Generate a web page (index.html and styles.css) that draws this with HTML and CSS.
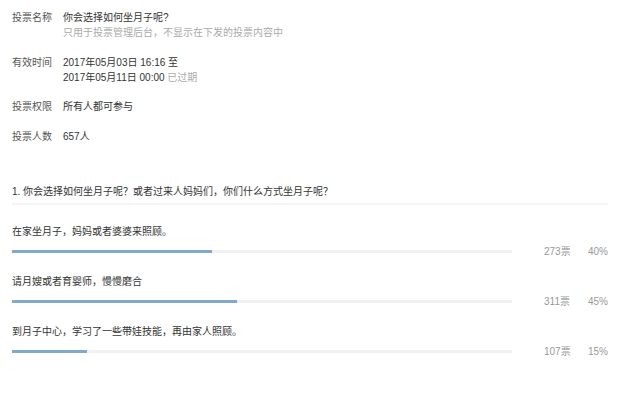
FILE: index.html
```html
<!DOCTYPE html>
<html lang="zh-CN">
<head>
    <meta charset="UTF-8">
    <meta name="viewport" content="width=device-width, initial-scale=1.0">
    <title>投票详情</title>
    <link rel="stylesheet" href="styles.css">
</head>
<body>
    <div class="info">
        <div class="row">
            <span class="label">投票名称</span>
            <div class="value">
                <p>你会选择如何坐月子呢?</p>
                <p class="hint">只用于投票管理后台，不显示在下发的投票内容中</p>
            </div>
        </div>
        <div class="row">
            <span class="label">有效时间</span>
            <div class="value">
                <p>2017年05月03日 16:16 至</p>
                <p>2017年05月11日 00:00 <span class="hint">已过期</span></p>
            </div>
        </div>
        <div class="row">
            <span class="label">投票权限</span>
            <div class="value"><p>所有人都可参与</p></div>
        </div>
        <div class="row">
            <span class="label">投票人数</span>
            <div class="value"><p>657人</p></div>
        </div>
    </div>

    <div class="question">1. 你会选择如何坐月子呢？或者过来人妈妈们，你们什么方式坐月子呢？</div>

    <ul class="options">
        <li>
            <p>在家坐月子，妈妈或者婆婆来照顾。</p>
            <div class="result">
                <div class="track"><div class="fill" style="width:40%"></div></div>
                <span class="count">273票</span>
                <span class="pct">40%</span>
            </div>
        </li>
        <li>
            <p>请月嫂或者育婴师，慢慢磨合</p>
            <div class="result">
                <div class="track"><div class="fill" style="width:45%"></div></div>
                <span class="count">311票</span>
                <span class="pct">45%</span>
            </div>
        </li>
        <li>
            <p>到月子中心，学习了一些带娃技能，再由家人照顾。</p>
            <div class="result">
                <div class="track"><div class="fill" style="width:15%"></div></div>
                <span class="count">107票</span>
                <span class="pct">15%</span>
            </div>
        </li>
    </ul>
</body>
</html>
```

FILE: styles.css
```css
*{
    box-sizing: border-box;
    margin: 0;
    padding: 0;
}
body{
    background-color: #fff;
    color: #333;
    font-family: "Liberation Sans", "Noto Sans CJK SC", sans-serif;
    font-size: 10px;
    line-height: 15px;
    padding: 10px 12px 0 12px;
}
.row{
    display: flex;
    margin-bottom: 14.7px;
}
.label{
    width: 51px;
    flex-shrink: 0;
    color: #555;
}
.hint{
    color: #aaa;
}
.question{
    margin-top: 40px;
    padding-bottom: 4px;
    width: 596px;
    border-bottom: 2px solid #f4f4f4;
}
.options{
    list-style: none;
    margin-top: 19px;
}
.options li{
    margin-bottom: 15px;
}
.result{
    display: flex;
    align-items: center;
    height: 15px;
    margin-top: 5px;
}
.track{
    width: 500px;
    height: 3px;
    background-color: #f1f1f1;
}
.fill{
    height: 100%;
    background-color: #80a9cc;
}
.count{
    margin-left: 32px;
    width: 44px;
    color: #999;
}
.pct{
    color: #999;
}
```
